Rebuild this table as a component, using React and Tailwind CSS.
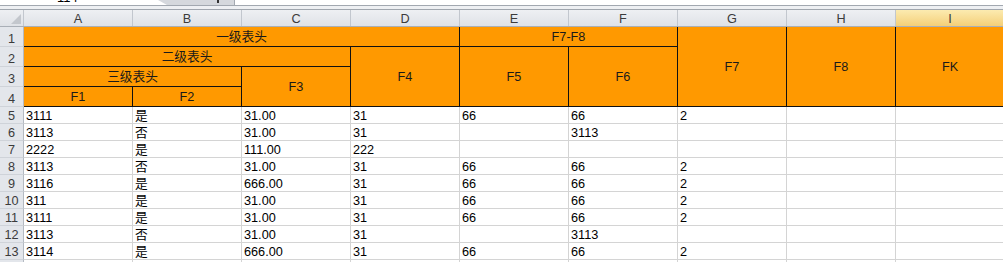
import React from 'react';

const COLS = ['A', 'B', 'C', 'D', 'E', 'F', 'G', 'H', 'I'];

const ROWS = [
    ['3111', '是', '31.00', '31', '66', '66', '2'],
    ['3113', '否', '31.00', '31', '', '3113', ''],
    ['2222', '是', '111.00', '222', '', '', ''],
    ['3113', '否', '31.00', '31', '66', '66', '2'],
    ['3116', '是', '666.00', '31', '66', '66', '2'],
    ['311', '是', '31.00', '31', '66', '66', '2'],
    ['3111', '是', '31.00', '31', '66', '66', '2'],
    ['3113', '否', '31.00', '31', '', '3113', ''],
    ['3114', '是', '666.00', '31', '66', '66', '2'],
];

const font = "font-['Liberation_Sans','Noto_Sans_CJK_SC',sans-serif]";

const RowNum = ({ n, className = '' }) => (
    <div className={`flex items-end justify-center bg-[#e3e6eb] border-r border-b border-r-[#b4bac2] border-b-[#cfd3d9] text-[#3b3b3b] text-[12.7px] leading-[14px] ${className}`}>
        {n}
    </div>
);

const Head = ({ children, className = '' }) => (
    <div className={`flex items-center justify-center bg-[#ff9900] border-r border-b border-[#111] text-[#1a1a1a] text-[12.7px] leading-[14px] ${className}`}>
        {children}
    </div>
);

const DataRow = ({ label, cells }) => (
    <div className="grid grid-cols-[24px_repeat(9,109px)] h-[17px]">
        <RowNum n={label} />
        {[...cells, '', ''].map((v, j) => (
            <div key={j} className="flex items-end pl-[2px] border-r border-b border-[#d4d4d4] text-black text-[12.7px] leading-[14px] whitespace-nowrap">
                {v}
            </div>
        ))}
    </div>
);

const App = () => {
    return (
        <div className={`w-[1003px] h-[262px] overflow-hidden bg-white ${font}`}>
            {/* formula bar bottom edge */}
            <div className="flex h-[5px] overflow-hidden bg-white">
                <div className="w-[57px]" />
                <div className="w-[101px] mt-[-9px] text-[13px] leading-[13px] text-black">114</div>
                <div className="relative w-[77px] h-[5px] bg-[#d5d8dd] border-r border-[#a3a9b1] [clip-path:polygon(0_0,100%_0,100%_100%,9px_100%)]">
                    <div className="absolute left-[59px] top-0 w-[2px] h-[3px] bg-[#333]" />
                </div>
            </div>
            <div className="h-[1px] bg-[#a2a8b0]" />
            <div className="h-[3px] bg-[#eef0f3]" />

            {/* column letters */}
            <div className="grid grid-cols-[24px_repeat(9,109px)] h-[18px] border-t border-b border-t-[#a0a6ae] border-b-[#a9afb7]">
                <div className="relative bg-linear-to-b from-[#eef0f3] to-[#dfe2e7] border-r border-[#c2c7ce]">
                    <svg className="absolute right-[2px] bottom-[2px]" width="10" height="10" viewBox="0 0 10 10">
                        <polygon points="10,0 10,10 0,10" fill="#c3c7cd" />
                    </svg>
                </div>
                {COLS.map(c => (
                    <div
                        key={c}
                        className={`flex items-center justify-center pt-[1px] border-r border-[#c2c7ce] text-[#3b3b3b] text-[12.7px] leading-[14px] ${c === 'I' ? 'bg-linear-to-b from-[#fcebb0] to-[#f4cf78]' : 'bg-linear-to-b from-[#eef0f3] to-[#dfe2e7]'}`}
                    >
                        {c}
                    </div>
                ))}
            </div>

            {/* merged header rows */}
            <div className="grid grid-cols-[24px_repeat(9,109px)] grid-rows-[20px_20px_20px_20px]">
                <RowNum n="1" className="col-start-1 row-start-1" />
                <RowNum n="2" className="col-start-1 row-start-2" />
                <RowNum n="3" className="col-start-1 row-start-3" />
                <RowNum n="4" className="col-start-1 row-start-4" />

                <Head className="col-start-2 col-span-4 row-start-1">一级表头</Head>
                <Head className="col-start-6 col-span-2 row-start-1">F7-F8</Head>
                <Head className="col-start-8 row-start-1 row-span-4">F7</Head>
                <Head className="col-start-9 row-start-1 row-span-4">F8</Head>
                <Head className="col-start-10 row-start-1 row-span-4">FK</Head>

                <Head className="col-start-2 col-span-3 row-start-2">二级表头</Head>
                <Head className="col-start-5 row-start-2 row-span-3">F4</Head>
                <Head className="col-start-6 row-start-2 row-span-3">F5</Head>
                <Head className="col-start-7 row-start-2 row-span-3">F6</Head>

                <Head className="col-start-2 col-span-2 row-start-3">三级表头</Head>
                <Head className="col-start-4 row-start-3 row-span-2">F3</Head>

                <Head className="col-start-2 row-start-4">F1</Head>
                <Head className="col-start-3 row-start-4">F2</Head>
            </div>

            {/* data rows */}
            {ROWS.map((row, i) => (
                <DataRow key={i} label={i + 5} cells={row} />
            ))}
            {/* next row, only its top edge is in view */}
            <DataRow label="" cells={['', '', '', '', '', '', '']} />
        </div>
    );
};

export default App;
